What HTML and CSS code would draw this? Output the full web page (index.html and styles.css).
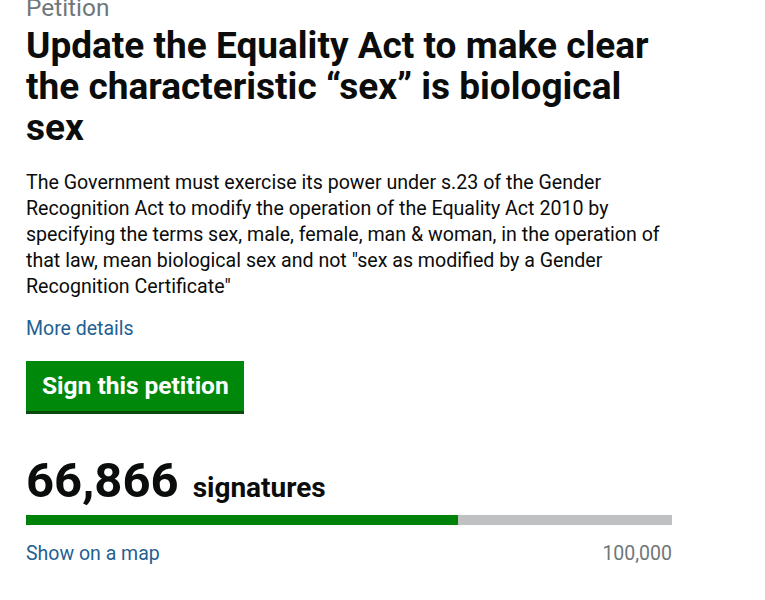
FILE: index.html
```html
<!DOCTYPE html>
<html lang="en">
<head>
<meta charset="utf-8">
<title>Petition</title>
<link rel="stylesheet" href="styles.css">
</head>
<body>
<main class="petition">
  <p class="kicker">Petition</p>
  <h1 class="title">Update the Equality Act to make clear the characteristic “sex” is biological sex</h1>
  <p class="summary">The Government must exercise its power under s.23 of the Gender Recognition Act to modify the operation of the Equality Act 2010 by specifying the terms sex, male, female, man &amp; woman, in the operation of that law, mean biological sex and not "sex as modified by a Gender Recognition Certificate"</p>
  <a class="link more" href="#">More details</a>
  <a class="button" href="#">Sign this petition</a>
  <p class="count"><span class="count-num">66,866</span> <span class="count-label">signatures</span></p>
  <div class="progress"><div class="progress-fill" style="width: 66.866%"></div></div>
  <div class="progress-foot">
    <a class="link" href="#">Show on a map</a>
    <span class="target">100,000</span>
  </div>
</main>
</body>
</html>
```

FILE: styles.css
```css
html, body {
  margin: 0;
  padding: 0;
  background: #ffffff;
}
body {
  font-family: Roboto, "Noto Sans", "Liberation Sans", sans-serif;
  color: #0b0c0c;
}
.petition {
  width: 646px;
  padding: 0 0 0 26px;
  display: flex;
  flex-direction: column;
  align-items: flex-start;
}
.kicker {
  margin: -5px 0 0 0;
  font-size: 24.4px;
  line-height: 26px;
  color: #6f777b;
}
.title {
  margin: 4px 0 0 0;
  font-size: 37px;
  line-height: 41px;
  font-weight: 700;
  letter-spacing: 0;
}
.summary {
  margin: 22px 0 0 0;
  font-size: 19.6px;
  line-height: 26px;
}
.link {
  color: #1f6193;
  text-decoration: none;
  font-size: 19.5px;
  line-height: 26px;
}
.more {
  margin-top: 16px;
}
.button {
  margin-top: 19px;
  display: block;
  background: #00880b;
  color: #ffffff;
  font-size: 24.5px;
  font-weight: 700;
  line-height: 30px;
  padding: 10px 15px 10px 16px;
  box-shadow: 0 3px 0 #0b4a0d;
  text-decoration: none;
}
.count {
  margin: 44px 0 0 0;
  display: flex;
  align-items: baseline;
  gap: 14px;
}
.count-num {
  font-size: 49px;
  line-height: 52px;
  font-weight: 700;
}
.count-label {
  font-size: 28px;
  font-weight: 700;
}
.progress {
  margin-top: 8px;
  width: 646px;
  height: 10px;
  background: #bfc1c3;
}
.progress-fill {
  height: 100%;
  background: #00820a;
}
.progress-foot {
  margin-top: 16px;
  width: 646px;
  display: flex;
  justify-content: space-between;
  align-items: baseline;
}
.target {
  font-size: 19.5px;
  line-height: 26px;
  color: #6f777b;
}
```
